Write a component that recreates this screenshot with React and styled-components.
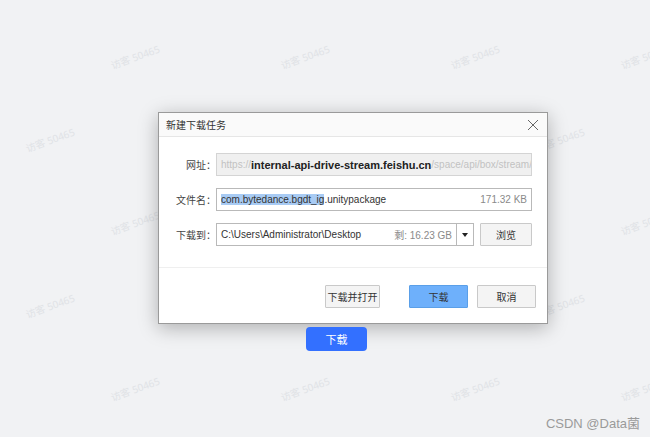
import React from "react";
import styled, { createGlobalStyle } from "styled-components";

const GlobalStyle = createGlobalStyle`
  html, body {
    margin: 0;
    padding: 0;
    background: #f1f2f4;
  }
  body {
    font-family: "Noto Sans", "Noto Sans CJK SC", sans-serif;
  }
`;

const ROW_Y = [57, 140, 223, 306, 389];
const COLS_A = [135, 305, 475, 645];
const COLS_B = [50, 220, 390, 560];

const marks = ROW_Y.flatMap((y, i) =>
  (i % 2 === 0 ? COLS_A : COLS_B).map((x) => ({ x, y }))
);

const Watermarks = () => (
  <MarkLayer>
    {marks.map((m, i) => (
      <Mark key={i} style={{ left: m.x - 30, top: m.y - 8 }}>
        访客 50465
      </Mark>
    ))}
  </MarkLayer>
);

const MarkLayer = styled.div`
  position: absolute;
  inset: 0;
  overflow: hidden;
  pointer-events: none;
`;

const Mark = styled.span`
  position: absolute;
  width: 60px;
  text-align: center;
  font-size: 10px;
  color: #e0e2e6;
  white-space: nowrap;
  transform: rotate(-20deg);
`;

const CloseIcon = () => (
  <svg width="12" height="12" viewBox="0 0 12 12">
    <path d="M1 1L11 11M11 1L1 11" stroke="#666" strokeWidth="1" fill="none" />
  </svg>
);

const Dialog = () => (
  <Window>
    <TitleBar>
      <span>新建下载任务</span>
      <CloseIcon />
    </TitleBar>
    <Body>
      <Row>
        <Label>网址：</Label>
        <Field disabled>
          <Dim>https://</Dim>
          <Strong>internal-api-drive-stream.feishu.cn</Strong>
          <Dim>/space/api/box/stream/download/all/</Dim>
        </Field>
      </Row>
      <Row>
        <Label>文件名：</Label>
        <Field>
          <Grow>
            <Selected>com.bytedance.bgdt_ig</Selected>.unitypackage
          </Grow>
          <Side>171.32 KB</Side>
        </Field>
      </Row>
      <Row>
        <Label>下载到：</Label>
        <PathBox>
          <Field as="div" noRight>
            <Grow>C:\Users\Administrator\Desktop</Grow>
            <Side>剩: 16.23 GB</Side>
          </Field>
          <Drop>
            <Caret />
          </Drop>
        </PathBox>
        <Button small>浏览</Button>
      </Row>
    </Body>
    <Footer>
      <Button wide>下载并打开</Button>
      <Button primary>下载</Button>
      <Button>取消</Button>
    </Footer>
  </Window>
);

const Window = styled.div`
  width: 388px;
  margin-left: 158px;
  background: #fff;
  border: 1px solid #9a9a9a;
  box-shadow: 0 4px 18px rgba(0, 0, 0, 0.28);
  position: relative;
  z-index: 1;
`;

const TitleBar = styled.div`
  height: 23px;
  display: flex;
  align-items: center;
  justify-content: space-between;
  padding: 0 8px 0 7px;
  background: #fafafa;
  border-bottom: 1px solid #e6e6e6;
  font-family: "Noto Sans CJK SC", sans-serif;
  font-size: 10px;
  color: #333;
`;

const Body = styled.div`
  display: flex;
  flex-direction: column;
  gap: 12px;
  padding: 16px 15px 21px 0;
  border-bottom: 1px solid #efefef;
`;

const Row = styled.div`
  display: flex;
  align-items: center;
  height: 23px;
`;

const Label = styled.div`
  width: 57px;
  text-align: right;
  font-family: "Noto Sans CJK SC", sans-serif;
  font-size: 10px;
  color: #444;
`;

const Field = styled.div`
  flex: 1;
  min-width: 0;
  height: 23px;
  box-sizing: border-box;
  display: flex;
  align-items: center;
  padding: 0 4px;
  border: 1px solid ${(p) => (p.disabled ? "#d4d4d4" : "#b9b9b9")};
  border-right: ${(p) => (p.noRight ? "none" : undefined)};
  background: ${(p) => (p.disabled ? "#f0f0f0" : "#fff")};
  font-family: "Liberation Sans", "Noto Sans CJK SC", sans-serif;
  font-size: 10px;
  color: #333;
  white-space: nowrap;
  overflow: hidden;
`;

const Dim = styled.span`
  color: #c2c2c2;
`;

const Strong = styled.span`
  color: #222;
  font-weight: bold;
  font-size: 11px;
`;

const Grow = styled.span`
  flex: 1;
`;

const Selected = styled.span`
  background: #a8cbf4;
`;

const Side = styled.span`
  color: #8a8a8a;
  margin-left: 8px;
`;

const PathBox = styled.div`
  flex: 1;
  display: flex;
`;

const Drop = styled.div`
  width: 18px;
  height: 23px;
  box-sizing: border-box;
  border: 1px solid #b9b9b9;
  display: flex;
  align-items: center;
  justify-content: center;
  background: #fff;
`;

const Caret = styled.span`
  width: 0;
  height: 0;
  border-left: 3px solid transparent;
  border-right: 3px solid transparent;
  border-top: 4px solid #222;
`;

const Button = styled.button`
  width: ${(p) => (p.small ? "52px" : p.wide ? "55px" : "59px")};
  height: 23px;
  margin-left: ${(p) => (p.small ? "6px" : "0")};
  padding: 0;
  box-sizing: border-box;
  font-family: "Noto Sans CJK SC", sans-serif;
  font-size: 10px;
  white-space: nowrap;
  color: #333;
  background: ${(p) => (p.primary ? "#6eb0fb" : "#f4f4f4")};
  border: 1px solid ${(p) => (p.primary ? "#5a9fe8" : "#c9c9c9")};
  border-radius: 1px;
`;

const Footer = styled.div`
  display: flex;
  justify-content: flex-end;
  gap: 9px;
  padding: 17px 11px 15px 0;
  & > :first-child {
    margin-right: 20px;
  }
`;

const Stage = styled.div`
  position: relative;
  width: 650px;
  height: 437px;
  overflow: hidden;
  padding-top: 112px;
  box-sizing: border-box;
`;

const MainButton = styled.button`
  display: block;
  margin: 3px 0 0 306px;
  width: 61px;
  height: 24px;
  border: none;
  border-radius: 4px;
  background: #3370ff;
  color: #fff;
  font-family: "Noto Sans CJK SC", sans-serif;
  font-size: 11px;
  position: relative;
  z-index: 1;
`;

const Credit = styled.div`
  position: absolute;
  right: 10px;
  bottom: 5px;
  font-family: "Liberation Sans", "Noto Sans CJK SC", sans-serif;
  font-size: 13px;
  color: #9a9a9a;
`;

const App = () => (
  <>
    <GlobalStyle />
    <Stage>
      <Watermarks />
      <Dialog />
      <MainButton>下载</MainButton>
      <Credit>CSDN @Data菌</Credit>
    </Stage>
  </>
);

export default App;
